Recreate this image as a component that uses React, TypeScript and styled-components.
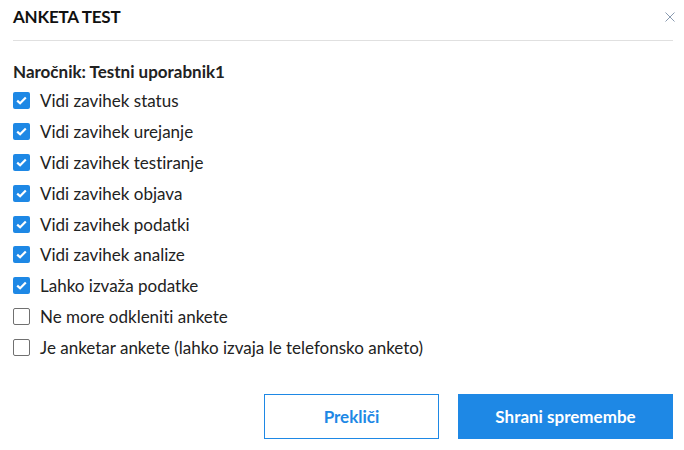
import React, { useState } from "react";
import styled, { createGlobalStyle } from "styled-components";

const GlobalStyle = createGlobalStyle`
  html, body {
    margin: 0;
    padding: 0;
    background: #ffffff;
  }
  body {
    font-family: Lato, "Liberation Sans", sans-serif;
    font-variant-ligatures: none;
    color: #222222;
  }
`;

const Dialog = styled.div`
  width: 684px;
  height: 450px;
  box-sizing: border-box;
  padding: 0 11px 0 13px;
  display: flex;
  flex-direction: column;
  background: #fff;
`;

const Header = styled.header`
  display: flex;
  align-items: center;
  justify-content: space-between;
  height: 33px;
  padding-bottom: 7px;
  border-bottom: 1px solid #e0e0e0;
`;

const Title = styled.h1`
  margin: 0;
  font-size: 17px;
  font-weight: 700;
  color: #111;
  letter-spacing: -0.2px;
`;

const CloseButton = styled.button`
  border: 0;
  background: transparent;
  padding: 0;
  width: 12px;
  height: 12px;
  margin-right: -3px;
  cursor: pointer;
  display: flex;
  align-items: center;
  justify-content: center;
`;

const Body = styled.section`
  padding-top: 19px;
  display: flex;
  flex-direction: column;
`;

const Client = styled.div`
  font-size: 17px;
  font-weight: 700;
  line-height: 24px;
  margin-bottom: 1px;
`;

const Row = styled.label`
  display: flex;
  align-items: center;
  gap: 10px;
  height: 30.9px;
  font-size: 17px;
  cursor: pointer;
`;

const Box = styled.span<{ $checked: boolean }>`
  width: 17px;
  height: 17px;
  box-sizing: border-box;
  border-radius: 2px;
  display: inline-flex;
  align-items: center;
  justify-content: center;
  background: ${(p) => (p.$checked ? "#1e88e5" : "#fff")};
  border: ${(p) => (p.$checked ? "none" : "1.5px solid #707070")};
`;

const Footer = styled.footer`
  margin-top: auto;
  padding-bottom: 11px;
  display: flex;
  justify-content: flex-end;
  gap: 19px;
`;

const Button = styled.button<{ $primary?: boolean }>`
  height: 45px;
  box-sizing: border-box;
  font-family: Lato, "Liberation Sans", sans-serif;
  font-variant-ligatures: none;
  font-size: 17px;
  font-weight: 700;
  cursor: pointer;
  border: 1.5px solid #1e88e5;
  width: ${(p) => (p.$primary ? "215px" : "175px")};
  background: ${(p) => (p.$primary ? "#1e88e5" : "#fff")};
  color: ${(p) => (p.$primary ? "#fff" : "#1e88e5")};
`;

const items = [
  { label: "Vidi zavihek status", checked: true },
  { label: "Vidi zavihek urejanje", checked: true },
  { label: "Vidi zavihek testiranje", checked: true },
  { label: "Vidi zavihek objava", checked: true },
  { label: "Vidi zavihek podatki", checked: true },
  { label: "Vidi zavihek analize", checked: true },
  { label: "Lahko izvaža podatke", checked: true },
  { label: "Ne more odkleniti ankete", checked: false },
  { label: "Je anketar ankete (lahko izvaja le telefonsko anketo)", checked: false },
];

const Check = () => (
  <svg width="11" height="9" viewBox="0 0 11 9">
    <path d="M1.2 4.6 L4.1 7.3 L9.8 1.4" fill="none" stroke="#fff" strokeWidth="2.2" />
  </svg>
);

export default function App() {
  const [state, setState] = useState(items.map((i) => i.checked));

  return (
    <>
      <GlobalStyle />
      <Dialog>
        <Header>
          <Title>ANKETA TEST</Title>
          <CloseButton aria-label="Zapri">
            <svg width="10" height="10" viewBox="0 0 10 10">
              <path d="M0.5 0.5 L9.5 9.5 M9.5 0.5 L0.5 9.5" stroke="#8a9bb0" strokeWidth="1" />
            </svg>
          </CloseButton>
        </Header>
        <Body>
          <Client>Naročnik: Testni uporabnik1</Client>
          {items.map((item, i) => (
            <Row
              key={item.label}
              onClick={() => setState((s) => s.map((v, j) => (j === i ? !v : v)))}
            >
              <Box $checked={state[i]}>{state[i] && <Check />}</Box>
              {item.label}
            </Row>
          ))}
        </Body>
        <Footer>
          <Button>Prekliči</Button>
          <Button $primary>Shrani spremembe</Button>
        </Footer>
      </Dialog>
    </>
  );
}
